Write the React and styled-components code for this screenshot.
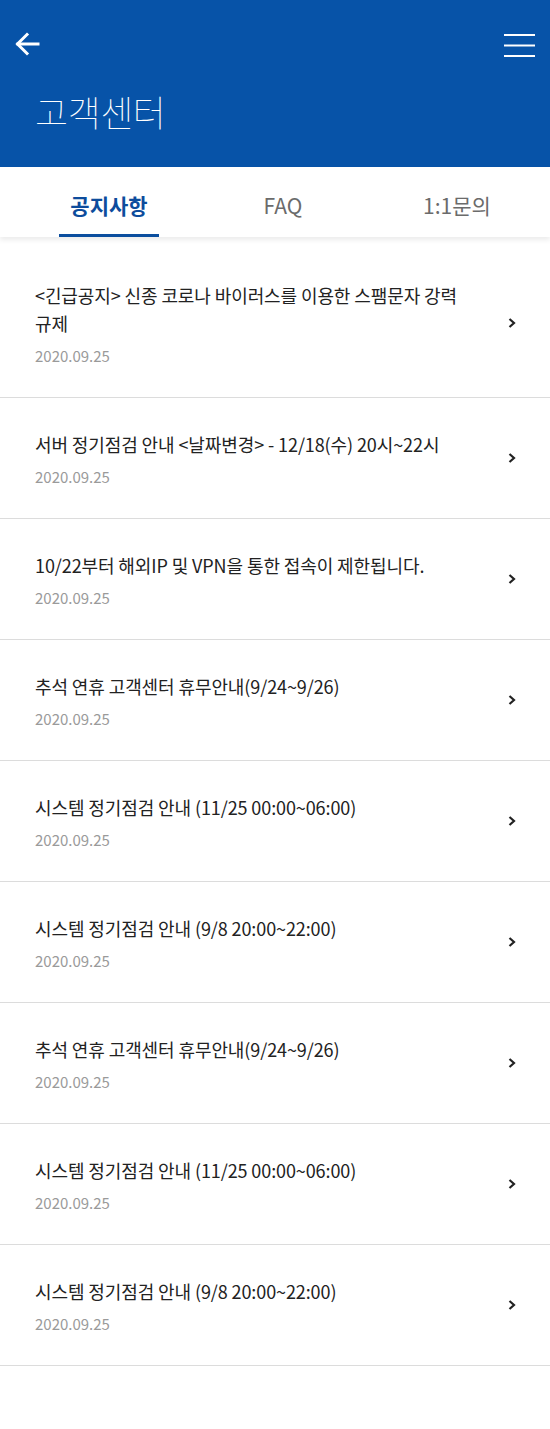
import React, { useState } from "react";
import styled, { createGlobalStyle } from "styled-components";

const Global = createGlobalStyle`
  html, body { margin: 0; padding: 0; background: #fff; }
  body { font-family: "Noto Sans CJK KR", "Noto Sans", sans-serif; -webkit-font-smoothing: antialiased; }
  * { box-sizing: border-box; }
`;

const Page = styled.div`
  width: 550px;
  min-height: 1429px;
  background: #fff;
`;

const Header = styled.header`
  background: #0753a8;
  height: 167px;
  padding: 0 15px 0 15px;
  display: flex;
  flex-direction: column;
`;

const TopBar = styled.div`
  height: 89px;
  padding-top: 32px;
  display: flex;
  justify-content: space-between;
  align-items: flex-start;
`;

const IconButton = styled.button`
  background: none;
  border: 0;
  padding: 0;
  margin: 0;
  cursor: pointer;
  display: flex;
  color: #fff;
`;

const Title = styled.h1`
  margin: 0;
  padding-left: 20px;
  color: #fff;
  font-family: "Noto Sans CJK KR Thin", "Noto Sans CJK KR Light", "Noto Sans CJK KR", sans-serif;
  font-size: 36px;
  font-weight: 100;
  line-height: 44px;
  letter-spacing: -0.5px;
`;

const Tabs = styled.nav`
  position: relative;
  height: 70px;
  padding: 0 6px 0 22px;
  display: grid;
  grid-template-columns: repeat(3, 1fr);
  background: #fff;
  box-shadow: 0 3px 5px rgba(0, 0, 0, 0.08);
  z-index: 1;
`;

const Tab = styled.button`
  position: relative;
  background: none;
  border: 0;
  padding: 0;
  padding-top: 6px;
  font-family: inherit;
  font-size: 21px;
  font-weight: ${(p) => (p.$active ? 700 : 400)};
  color: ${(p) => (p.$active ? "#0d4c9c" : "#6b6b6b")};
  cursor: pointer;
  &::after {
    content: "";
    display: ${(p) => (p.$active ? "block" : "none")};
    position: absolute;
    left: 50%;
    bottom: 0;
    transform: translateX(-50%);
    width: 100px;
    height: 3px;
    background: #0b4e9e;
  }
`;

const List = styled.ul`
  list-style: none;
  margin: 0;
  padding: 12px 0 0;
`;

const Item = styled.li`
  display: flex;
  align-items: center;
  padding: 32px 33px 30px 35px;
  border-bottom: 1px solid #dcdcdc;
`;

const Body = styled.div`
  flex: 1;
  min-width: 0;
  padding-right: 40px;
`;

const ItemTitle = styled.div`
  font-size: 18px;
  line-height: 28px;
  color: #222;
  font-weight: 400;
  letter-spacing: -0.1px;
`;

const ItemDate = styled.div`
  margin-top: 8px;
  font-size: 15px;
  line-height: 22px;
  color: #9a9a9a;
`;

const Chevron = styled.svg`
  flex: none;
  width: 10px;
  height: 12px;
  margin-top: -2px;
`;

const items = [
  "<긴급공지> 신종 코로나 바이러스를 이용한 스팸문자 강력 규제",
  "서버 정기점검 안내 <날짜변경> - 12/18(수) 20시~22시",
  "10/22부터 해외IP 및 VPN을 통한 접속이 제한됩니다.",
  "추석 연휴 고객센터 휴무안내(9/24~9/26)",
  "시스템 정기점검 안내 (11/25 00:00~06:00)",
  "시스템 정기점검 안내 (9/8 20:00~22:00)",
  "추석 연휴 고객센터 휴무안내(9/24~9/26)",
  "시스템 정기점검 안내 (11/25 00:00~06:00)",
  "시스템 정기점검 안내 (9/8 20:00~22:00)",
];

export default function App() {
  const [tab, setTab] = useState(0);
  const tabs = ["공지사항", "FAQ", "1:1문의"];
  return (
    <Page>
      <Global />
      <Header>
        <TopBar>
          <IconButton aria-label="back">
            <svg width="26" height="24" viewBox="0 0 26 24" fill="none" stroke="#fff" strokeWidth="3" strokeLinecap="square">
              <path d="M3 12 H23" />
              <path d="M12 2.5 L2.5 12 L12 21.5" strokeLinejoin="miter" />
            </svg>
          </IconButton>
          <IconButton aria-label="menu">
            <svg width="33" height="26" viewBox="0 0 33 26" fill="none" stroke="#fff" strokeWidth="2">
              <path d="M2 3 H33" />
              <path d="M2 13.5 H33" />
              <path d="M2 24 H33" />
            </svg>
          </IconButton>
        </TopBar>
        <Title>고객센터</Title>
      </Header>
      <Tabs>
        {tabs.map((t, i) => (
          <Tab key={t} $active={tab === i} onClick={() => setTab(i)}>
            {t}
          </Tab>
        ))}
      </Tabs>
      <List>
        {items.map((t, i) => (
          <Item key={i}>
            <Body>
              <ItemTitle>{t}</ItemTitle>
              <ItemDate>2020.09.25</ItemDate>
            </Body>
            <Chevron viewBox="0 0 10 12" fill="none" stroke="#222" strokeWidth="2.2">
              <path d="M2.5 2 L7 6 L2.5 10" />
            </Chevron>
          </Item>
        ))}
      </List>
    </Page>
  );
}
